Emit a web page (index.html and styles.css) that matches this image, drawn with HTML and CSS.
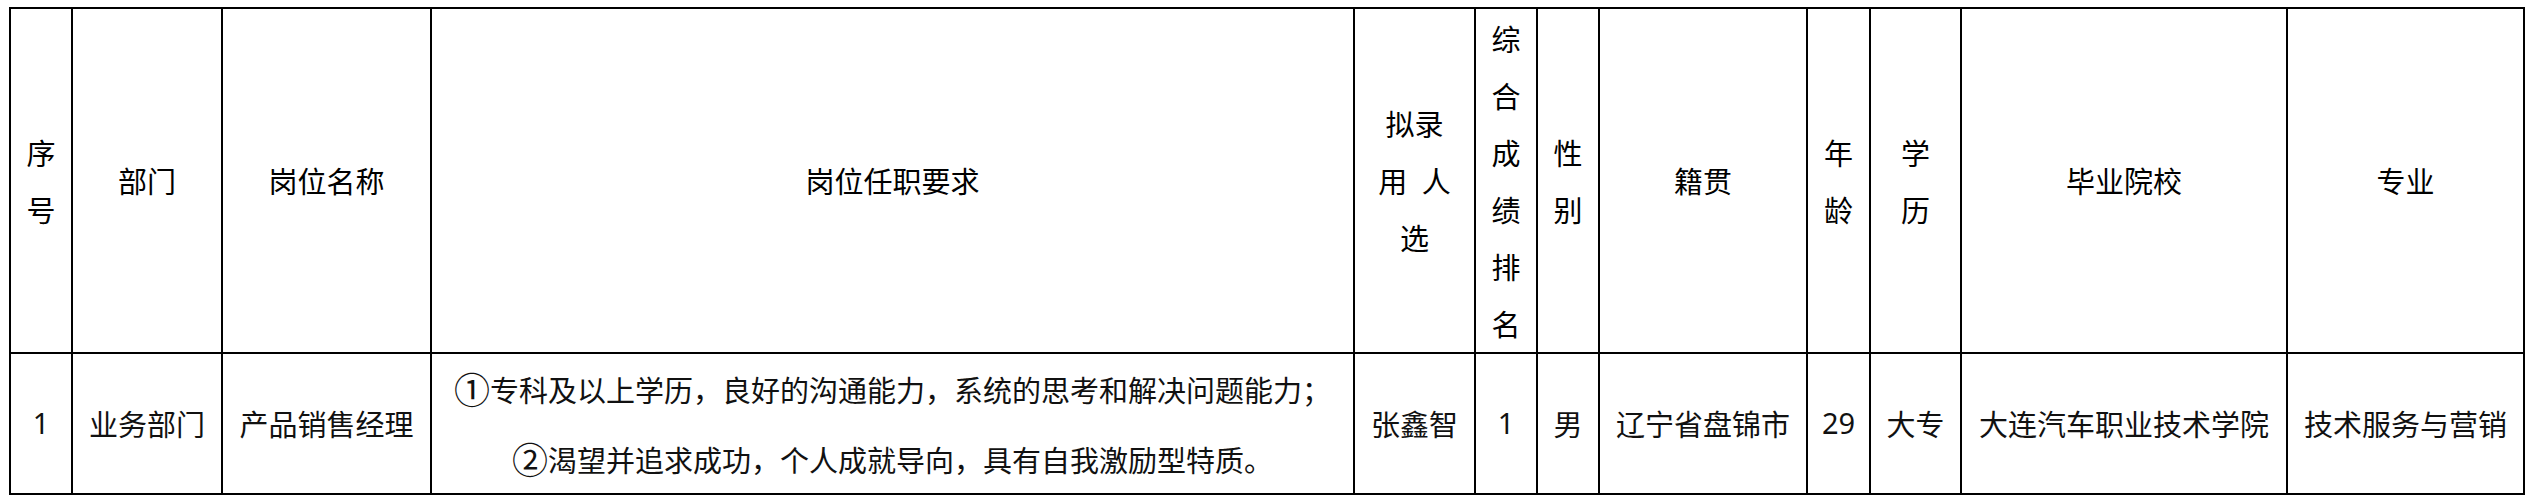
FILE: index.html
```html
<!DOCTYPE html>
<html lang="zh-CN">
<head>
<meta charset="utf-8">
<title>拟录用人选公示</title>
<link rel="stylesheet" href="styles.css">
</head>
<body>
<div class="page">
  <div class="sheet">
    <div class="cell head"><div class="stack"><span>序</span><span>号</span></div></div>
    <div class="cell head">部门</div>
    <div class="cell head">岗位名称</div>
    <div class="cell head">岗位任职要求</div>
    <div class="cell head"><div class="stack"><span>拟录</span><span>用&ensp;人</span><span>选</span></div></div>
    <div class="cell head"><div class="stack"><span>综</span><span>合</span><span>成</span><span>绩</span><span>排</span><span>名</span></div></div>
    <div class="cell head"><div class="stack"><span>性</span><span>别</span></div></div>
    <div class="cell head">籍贯</div>
    <div class="cell head"><div class="stack"><span>年</span><span>龄</span></div></div>
    <div class="cell head"><div class="stack"><span>学</span><span>历</span></div></div>
    <div class="cell head">毕业院校</div>
    <div class="cell head">专业</div>

    <div class="cell data num">1</div>
    <div class="cell data">业务部门</div>
    <div class="cell data">产品销售经理</div>
    <div class="cell data"><div class="req"><span><span class="circ">①</span>专科及以上学历，良好的沟通能力，系统的思考和解决问题能力；</span><span><span class="circ">②</span>渴望并追求成功，个人成就导向，具有自我激励型特质。</span></div></div>
    <div class="cell data">张鑫智</div>
    <div class="cell data num">1</div>
    <div class="cell data">男</div>
    <div class="cell data">辽宁省盘锦市</div>
    <div class="cell data num">29</div>
    <div class="cell data">大专</div>
    <div class="cell data">大连汽车职业技术学院</div>
    <div class="cell data">技术服务与营销</div>
  </div>
</div>
</body>
</html>
```

FILE: styles.css
```css
html, body {
  margin: 0;
  padding: 0;
  background: #ffffff;
}

.page {
  padding: 7px 0 0 9px;
}

.sheet {
  display: inline-grid;
  grid-template-columns: 60px 148px 207px 921px 119px 60px 60px 206px 61px 89px 324px 235px;
  grid-template-rows: 343px 139px;
  gap: 2px;
  padding: 2px;
  background: #000000;
  font-family: "Noto Sans CJK SC", "Noto Sans", sans-serif;
  font-size: 29px;
  color: #000000;
}

.cell {
  background: #ffffff;
  display: flex;
  align-items: center;
  justify-content: center;
  text-align: center;
  white-space: nowrap;
  overflow: visible;
  line-height: 1.2;
}

.stack {
  display: flex;
  flex-direction: column;
  align-items: center;
  line-height: 57px;
}

.data {
  color: #111111;
}

.num {
  font-family: "Noto Sans", "Noto Sans CJK SC", sans-serif;
}

.req {
  display: flex;
  flex-direction: column;
  align-items: center;
  line-height: 70px;
}

.circ {
  font-size: 36px;
  line-height: 0;
  vertical-align: -2px;
}
```
